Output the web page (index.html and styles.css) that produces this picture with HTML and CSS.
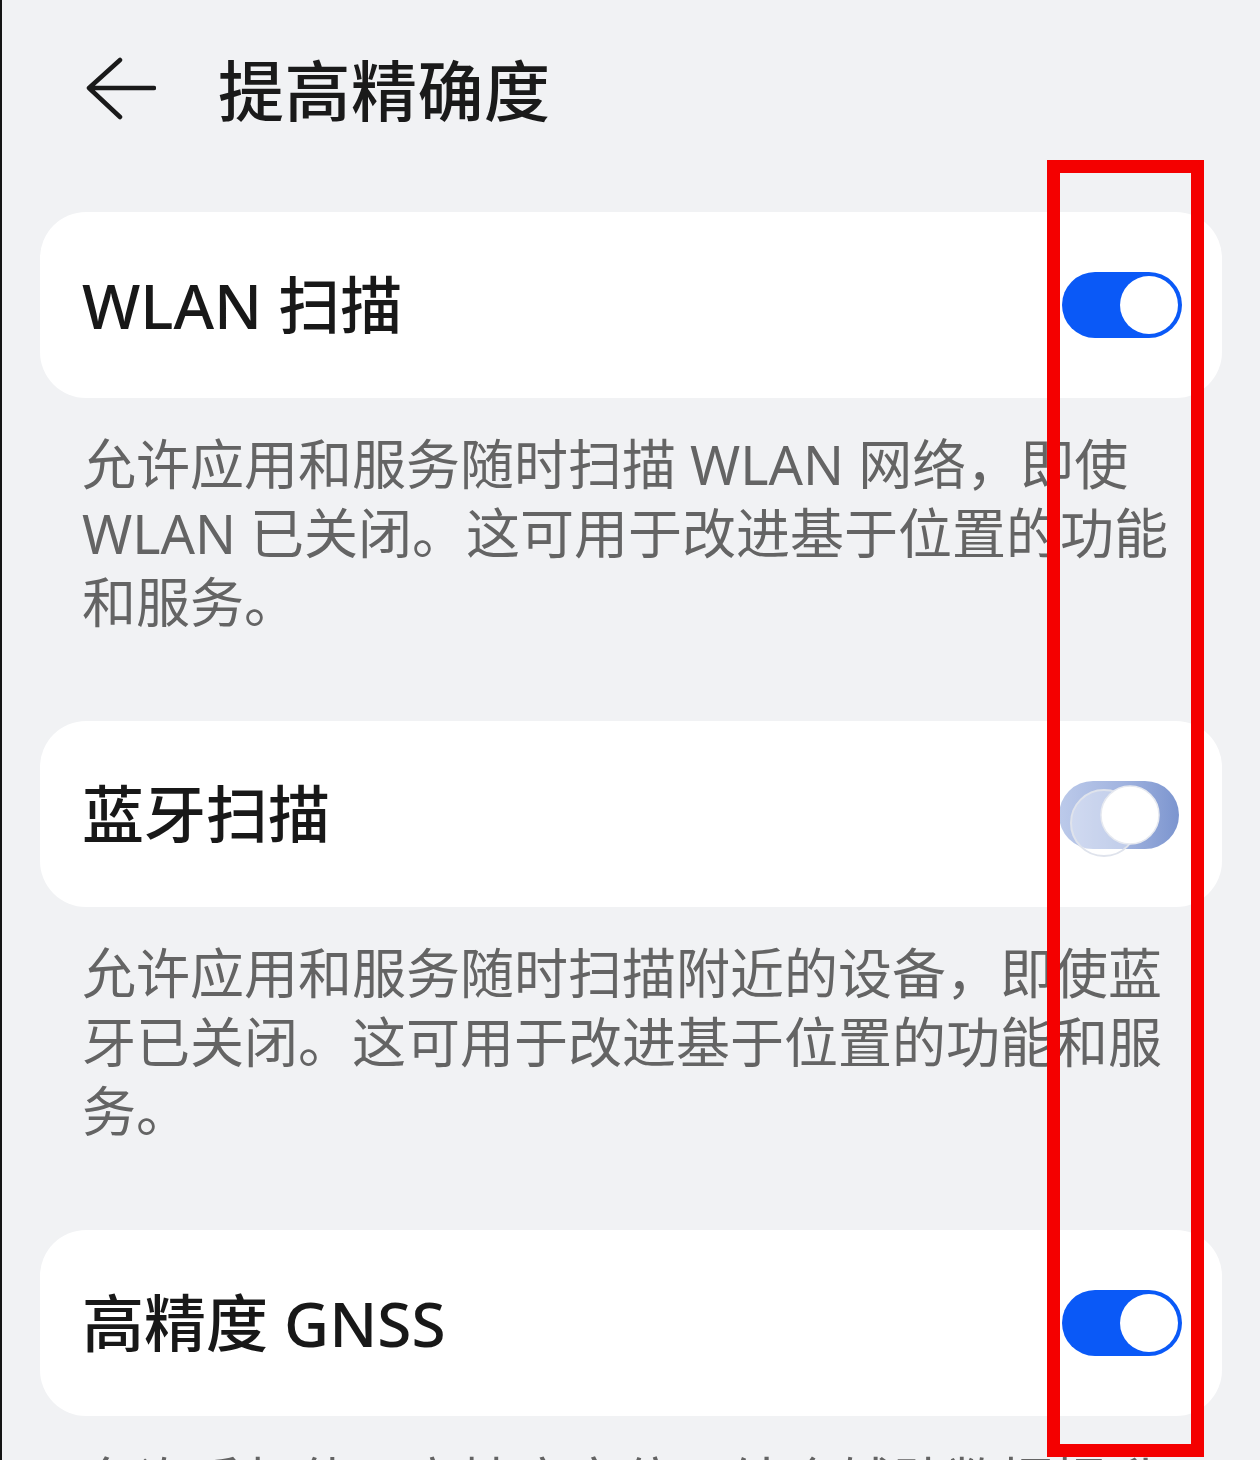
FILE: index.html
```html
<!DOCTYPE html>
<html lang="zh-CN">
<head>
<meta charset="utf-8">
<title>提高精确度</title>
<link rel="stylesheet" href="styles.css">
</head>
<body>
<div class="page">
  <header class="header">
    <svg class="back" width="70" height="64" viewBox="0 0 70 64" aria-hidden="true">
      <path d="M34 3 L3 31 L34 60 M3 31 H68" fill="none" stroke="#1a1a1a" stroke-width="4.5" stroke-linecap="round" stroke-linejoin="round"/>
    </svg>
    <h1 class="title">提高精确度</h1>
  </header>

  <section class="group">
    <div class="card">
      <span class="card-title">WLAN 扫描</span>
      <div class="switch on"><div class="knob"></div></div>
    </div>
    <p class="desc">允许应用和服务随时扫描 WLAN 网络，即使 WLAN 已关闭。这可用于改进基于位置的功能和服务。</p>
  </section>

  <section class="group">
    <div class="card">
      <span class="card-title">蓝牙扫描</span>
      <svg class="switch-moving" width="122" height="80" viewBox="0 0 122 80" aria-hidden="true">
        <defs>
          <linearGradient id="trk" x1="0" x2="1" y1="0" y2="0">
            <stop offset="0" stop-color="#bccaea"/>
            <stop offset="0.5" stop-color="#a3b5e0"/>
            <stop offset="1" stop-color="#7c95cf"/>
          </linearGradient>
        </defs>
        <rect x="1" y="1" width="120" height="68" rx="34" fill="url(#trk)"/>
        <circle cx="46" cy="43" r="33" fill="#ffffff" fill-opacity="0.35" stroke="#dfe3ec" stroke-width="2"/>
        <circle cx="72" cy="35" r="29" fill="#ffffff" stroke="#e6e9f0" stroke-width="1.5"/>
      </svg>
    </div>
    <p class="desc">允许应用和服务随时扫描附近的设备，即使蓝牙已关闭。这可用于改进基于位置的功能和服务。</p>
  </section>

  <section class="group">
    <div class="card">
      <span class="card-title">高精度 GNSS</span>
      <div class="switch on"><div class="knob"></div></div>
    </div>
    <p class="desc">允许手机使用高精度定位，结合辅助数据提升定位精度，提供更准确的位置服务。</p>
  </section>

  <div class="highlight"></div>
</div>
</body>
</html>
```

FILE: styles.css
```css
html, body {
  margin: 0;
  padding: 0;
  height: 1460px;
  overflow: hidden;
}

body {
  background: #f1f2f4;
  font-family: "Noto Sans", "Noto Sans CJK SC", sans-serif;
  color: #1a1a1a;
}

.page {
  position: relative;
  height: 1460px;
  border-left: 2px solid #141414;
  padding: 0 38px;
  box-sizing: border-box;
}

.header {
  height: 180px;
  display: flex;
  align-items: center;
  padding-left: 46px;
  gap: 62px;
}

.back {
  flex: none;
  margin-top: -2px;
}

.title {
  margin: 0;
  font-size: 66px;
  font-weight: 500;
  line-height: 1;
  color: #1a1a1a;
  letter-spacing: 0.5px;
}

.group {
  margin-top: 32px;
}

.group + .group {
  margin-top: 0;
}

.card {
  height: 186px;
  background: #ffffff;
  border-radius: 46px;
  display: flex;
  align-items: center;
  justify-content: space-between;
  padding: 0 40px 0 42px;
  box-sizing: border-box;
}

.card-title {
  font-size: 62px;
  font-weight: 500;
  color: #181818;
  line-height: 1;
}

.switch {
  width: 120px;
  height: 66px;
  border-radius: 33px;
  background: #0a59f7;
  display: flex;
  align-items: center;
  justify-content: flex-end;
  padding: 0 4px;
  box-sizing: border-box;
}

.knob {
  width: 58px;
  height: 58px;
  border-radius: 50%;
  background: #ffffff;
}

.switch-moving {
  flex: none;
  margin-right: 2px;
  margin-top: 12px;
}

.desc {
  margin: 0;
  padding: 32px 28px 84px 42px;
  font-size: 54px;
  line-height: 69px;
  color: #646464;
}

.highlight {
  position: absolute;
  left: 1045px;
  top: 160px;
  width: 157px;
  height: 1297px;
  border: 13px solid #f40000;
  box-sizing: border-box;
}
```
